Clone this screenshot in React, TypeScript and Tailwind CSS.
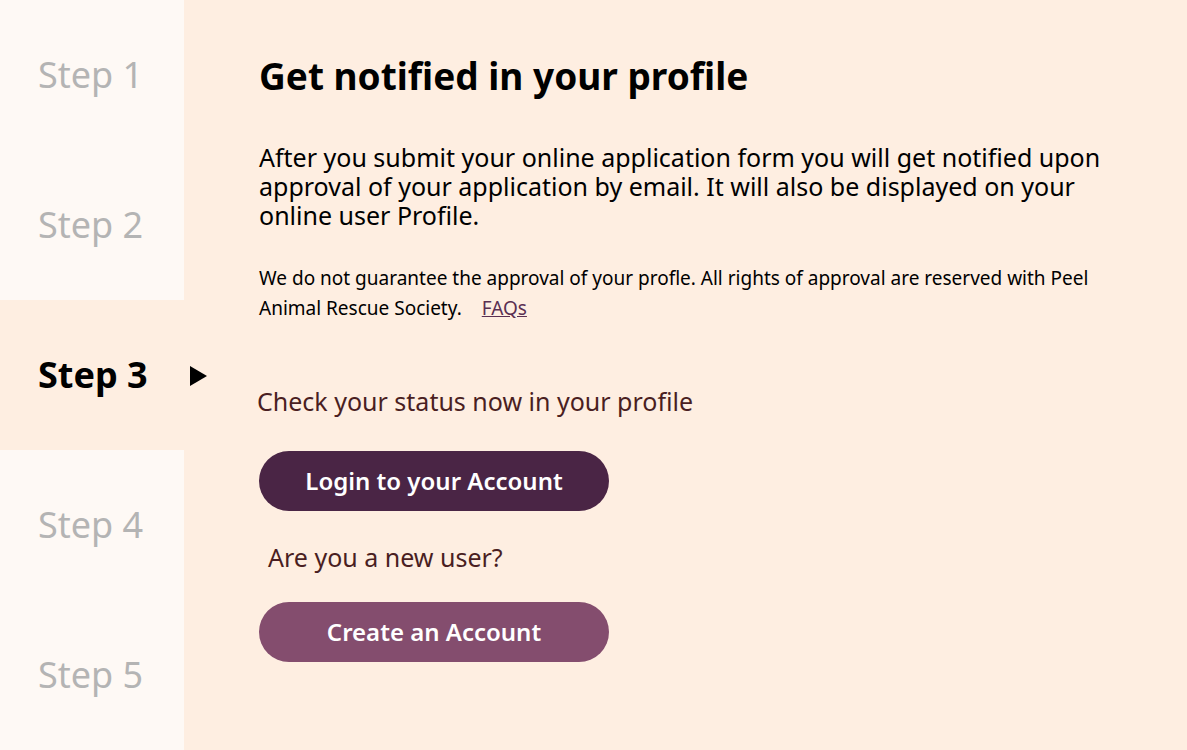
const STEPS = ["Step 1", "Step 2", "Step 3", "Step 4", "Step 5"];
const ACTIVE = 2;

function StepItem({ label, active }: { label: string; active: boolean }) {
  return (
    <div
      className={`relative flex h-[150px] items-center pl-[38px] ${
        active ? "bg-[#feeee1]" : "bg-[#fef9f5]"
      }`}
    >
      <span
        className={`text-[36px] ${
          active ? "font-bold text-black" : "text-[#b4b4b4]"
        }`}
      >
        {label}
      </span>
      {active && (
        <svg
          className="absolute right-[-23px] top-[66px]"
          width="17"
          height="20"
          viewBox="0 0 17 20"
        >
          <polygon points="0,0 17,10 0,20" fill="#000" />
        </svg>
      )}
    </div>
  );
}

export default function App() {
  return (
    <div
      className="flex h-[750px] w-[1187px] overflow-hidden bg-[#feeee1]"
      style={{ fontFamily: '"Noto Sans", "Open Sans", sans-serif' }}
    >
      {/* Steps */}
      <aside className="flex w-[184px] shrink-0 flex-col">
        {STEPS.map((s, i) => (
          <StepItem key={s} label={s} active={i === ACTIVE} />
        ))}
      </aside>

      {/* Content */}
      <main className="flex-1 pl-[75px] pr-[60px] pt-[53px]">
        <h1 className="text-[37px] font-bold leading-[46px] text-black">
          Get notified in your profile
        </h1>
        <p className="mt-[44px] text-[25px] leading-[29px] text-black">
          After you submit your online application form you will get notified
          upon approval of your application by email. It will also be displayed
          on your online user Profile.
        </p>
        <p className="mt-[33px] text-[19px] leading-[30px] text-black">
          We do not guarantee the approval of your profle. All rights of
          approval are reserved with Peel Animal Rescue Society.
          <a href="#" className="ml-[20px] text-[#5a2f52] underline">
            FAQs
          </a>
        </p>

        <p className="ml-[-2px] mt-[63px] text-[25px] leading-[30px] text-[#4a1e22]">
          Check your status now in your profile
        </p>
        <button className="mt-[35px] flex h-[60px] w-[350px] items-center justify-center rounded-full bg-[#4a2545] text-[24px] font-semibold text-white">
          Login to your Account
        </button>
        <p className="ml-[9px] mt-[31px] text-[25px] leading-[30px] text-[#4a1e22]">
          Are you a new user?
        </p>
        <button className="mt-[30px] flex h-[60px] w-[350px] items-center justify-center rounded-full bg-[#844d6e] text-[24px] font-semibold text-white">
          Create an Account
        </button>
      </main>
    </div>
  );
}
